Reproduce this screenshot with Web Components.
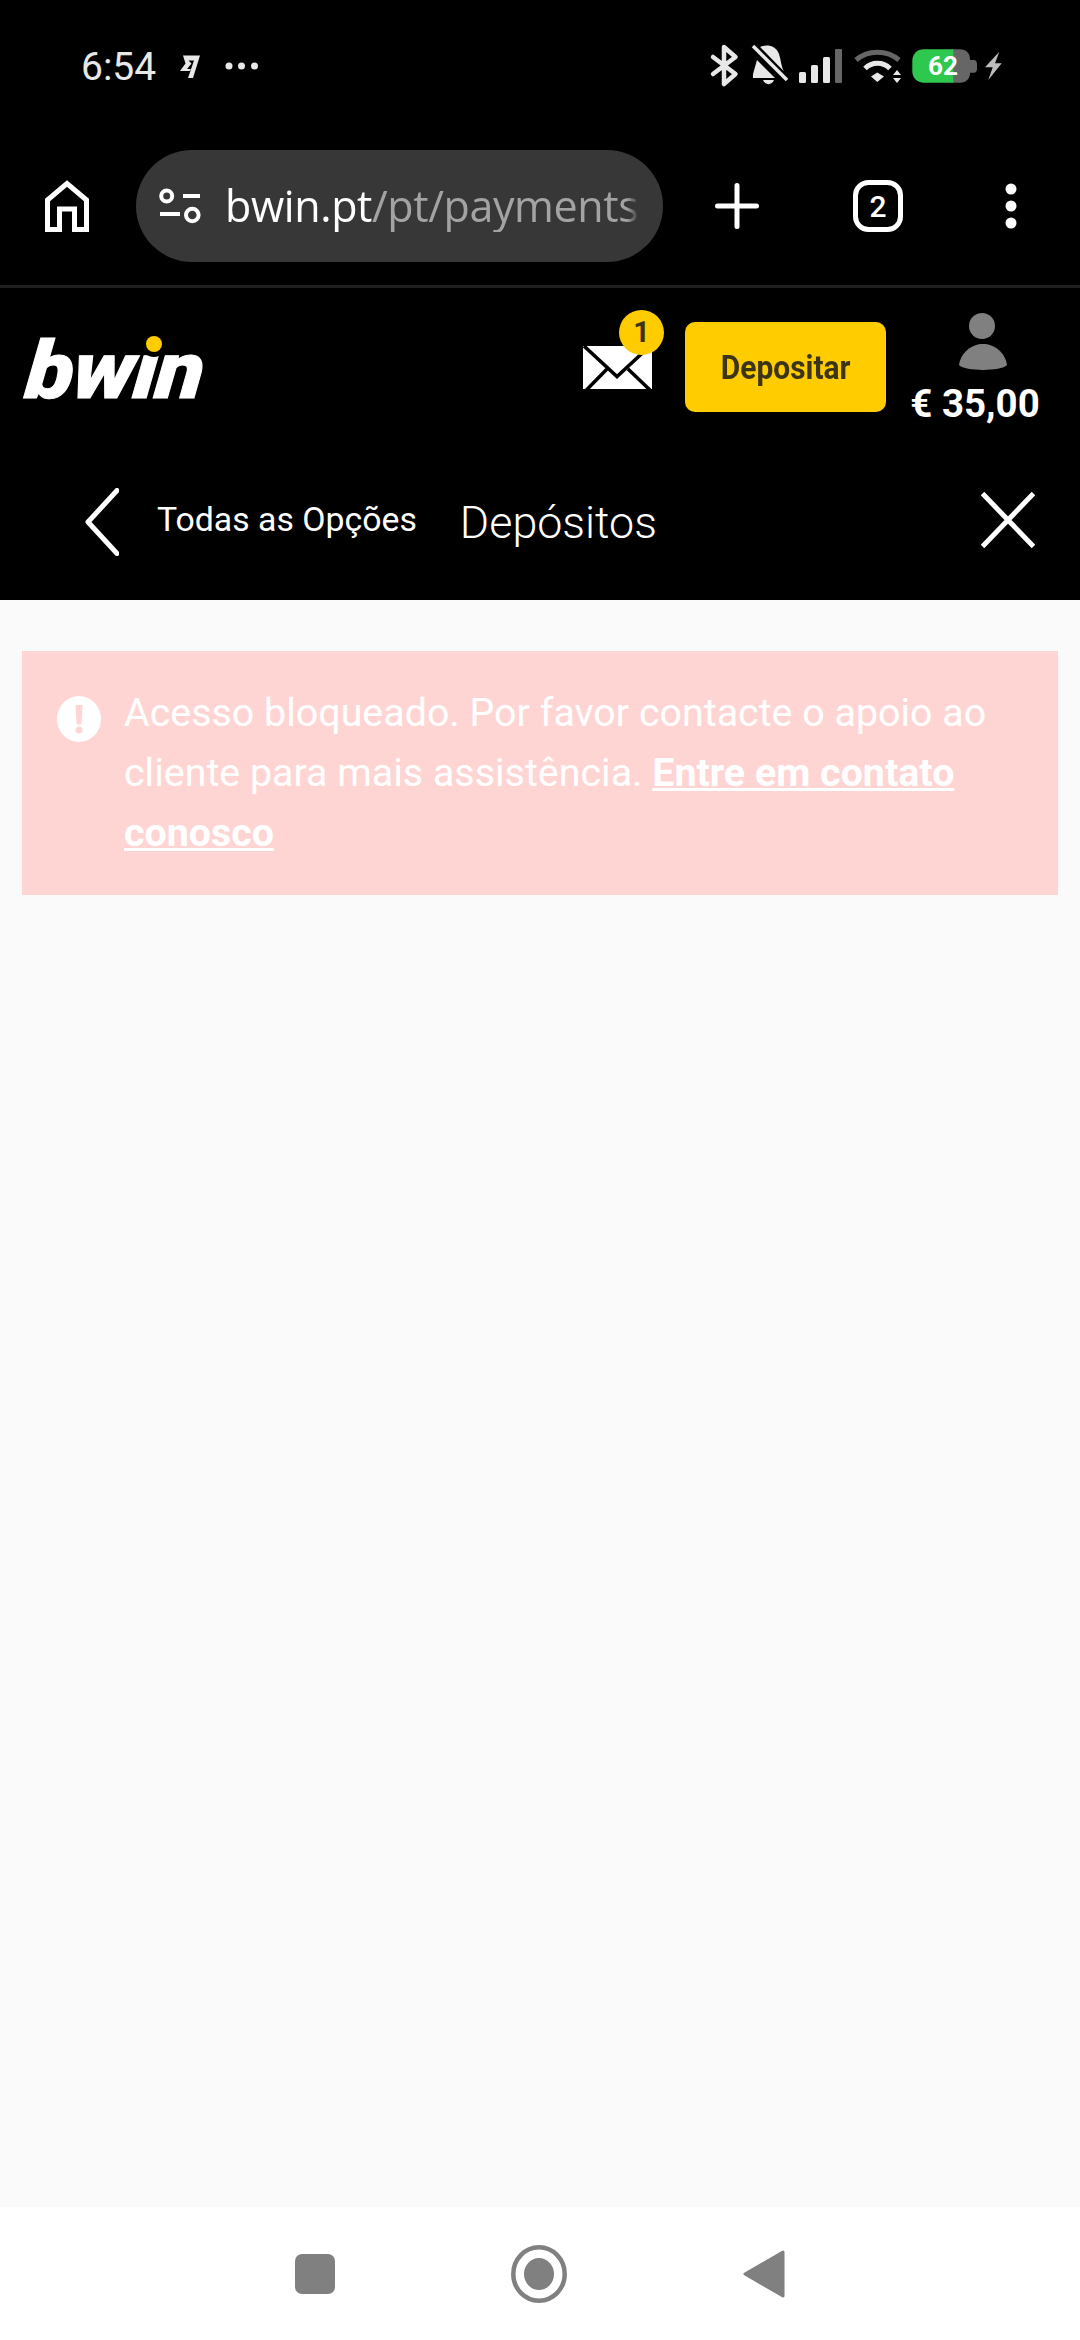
<!DOCTYPE html>
<html lang="pt">
<head>
<meta charset="utf-8">
<title>bwin</title>
<style>
html, body { margin: 0; padding: 0; background: #000; }
body { font-family: Roboto, "Liberation Sans", sans-serif; }
</style>
</head>
<body>
<app-shell>
    <status-bar slot="status" time="6:54" battery="62"></status-bar>
    <browser-bar slot="browser" tabs="2">
        <span slot="host">bwin.pt</span><span slot="path">/pt/payments</span>
    </browser-bar>
    <site-header slot="header" balance="€ 35,00" count="1">Depositar</site-header>
    <sub-header slot="header">
        <span slot="back">Todas as Opções</span>
        <span slot="title">Depósitos</span>
    </sub-header>
    <alert-box>
        Acesso bloqueado. Por favor contacte o apoio ao<br>
        cliente para mais assistência. <a href="#">Entre em contato</a><br>
        <a href="#">conosco</a>
    </alert-box>
    <nav-bar slot="nav"></nav-bar>
</app-shell>

<script>
function define(name, html, setup) {
    const template = document.createElement('template');
    template.innerHTML = html;
    customElements.define(name, class extends HTMLElement {
        constructor() {
            super();
            this.attachShadow({ mode: 'open' });
            this.shadowRoot.appendChild(template.content.cloneNode(true));
        }
        connectedCallback() {
            if (setup) setup(this.shadowRoot, this);
        }
    });
}

define('app-shell', `
<style>
:host { display: flex; flex-direction: column; width: 1080px; height: 2340px; background: #000; }
main { flex: 1; background: #fafafa; padding: 51px 22px; box-sizing: border-box; }
</style>
<slot name="status"></slot>
<slot name="browser"></slot>
<slot name="header"></slot>
<main><slot></slot></main>
<slot name="nav"></slot>
`);

define('status-bar', `
<style>
:host { display: flex; align-items: center; height: 130px; box-sizing: border-box; padding: 2px 78px 0 81px; color: #e8e8e8; }
.time { font: 400 39px/1 Roboto, sans-serif; width: 77px; margin-top: 3px; }
.left { flex: 1; display: flex; align-items: center; }
svg { display: block; flex: none; }
</style>
<div class="left">
    <span class="time"></span>
    <svg width="20" height="23" viewBox="0 0 20 23" style="margin-left:22px">
        <path d="M3 .500H20L13 23H8L14 5.500H8.500L11.500 8.500 7 14H11L9.500 16H0L5.500 8.500Z" fill="#e8e8e8"/>
    </svg>
    <svg width="36" height="8" viewBox="0 0 36 8" style="margin-left:25px">
        <circle cx="4" cy="4" r="3.500" fill="#e8e8e8"/><circle cx="16.500" cy="4" r="3.500" fill="#e8e8e8"/><circle cx="29.500" cy="4" r="3.500" fill="#e8e8e8"/>
    </svg>
</div>
<svg width="296" height="44" viewBox="706 44 296 44">
    <!-- bluetooth -->
    <path d="M713 57 735.500 74 724 84V47L735.500 57 713 74" fill="none" stroke="#e8e8e8" stroke-width="4.500" stroke-linejoin="round" stroke-linecap="round"/>
    <!-- muted bell -->
    <path d="M760 47C766 44 776 45 779 54 781 60 781 66 784 72ZM757 60 753 74V78H775ZM763 80H774C772 85.500 765 85.500 763 80Z" fill="#e8e8e8"/>
    <path d="M753 46 787 80" stroke="#000" stroke-width="8"/>
    <path d="M753 46 787 80" stroke="#e8e8e8" stroke-width="3.500"/>
    <!-- signal -->
    <rect x="799" y="72" width="7" height="11" rx="1.500" fill="#e8e8e8"/>
    <rect x="811" y="65" width="7" height="18" rx="1.500" fill="#e8e8e8"/>
    <rect x="823" y="57" width="7" height="26" rx="1.500" fill="#e8e8e8"/>
    <rect x="835" y="49" width="7" height="34" rx="1" fill="#666"/>
    <!-- wifi -->
    <path d="M856 60C868 49.500 887 49.500 899 60" fill="none" stroke="#666" stroke-width="5"/>
    <path d="M865 68.500C872 61.500 883 61.500 890 68.500" fill="none" stroke="#e8e8e8" stroke-width="5"/>
    <path d="M871 76.500 877.300 72.500 884 76.500 877.300 82Z" fill="#e8e8e8"/>
    <path d="M893 75 897 70 901 75ZM893 78H901L897 83Z" fill="#e8e8e8"/>
    <!-- battery -->
    <path d="M952 49.300H960C966 49.300 970 53 970 59.500V60H974C976 60 977 62 977 64V69C977 71 976 72.700 974 72.700H970V73C970 79 966 82.700 960 82.700H952Z" fill="#666"/>
    <path d="M953.300 49.300H924C917 49.300 912.300 54 912.300 61V71C912.300 78 917 82.700 924 82.700H953.300Z" fill="#2dc84d"/>
    <text x="943" y="74.500" text-anchor="middle" font-family="Roboto, sans-serif" font-weight="700" font-size="26" fill="#fff" textLength="30" lengthAdjust="spacingAndGlyphs" class="battery"></text>
    <!-- charging -->
    <path d="M999.300 51.700 985 67.300H992.700L988.300 80 1001.700 63.300H995Z" fill="#bdbdbd"/>
</svg>
`, (root, el) => {
    root.querySelector('.time').textContent = el.getAttribute('time');
    root.querySelector('.battery').textContent = el.getAttribute('battery');
});

define('browser-bar', `
<style>
:host { display: flex; align-items: center; height: 158px; box-sizing: border-box; padding: 20px 0 23px 45px; border-bottom: 3px solid #202020; }
.pill { display: flex; align-items: center; width: 527px; height: 112px; border-radius: 56px; background: #373737; margin-left: 47px; padding-left: 22px; box-sizing: border-box; overflow: hidden; flex: none; }
.url { font: 400 43px/1.2 "Open Sans", Roboto, sans-serif; white-space: nowrap; margin-left: 23px; color: #fff; width: 414px; overflow: hidden; letter-spacing: -.4px; -webkit-mask-image: linear-gradient(to right, #000 97%, transparent 100%); mask-image: linear-gradient(to right, #000 97%, transparent 100%); }
.path { color: #a3a3a3; }
svg { display: block; flex: none; }
</style>
<svg width="44" height="52" viewBox="0 0 44 52" fill="none" stroke="#fff" stroke-width="5">
    <path d="M2.500 49.500V20L22 3.500 41.500 20V49.500H29.500V29H14.500V49.500Z"/>
</svg>
<div class="pill">
    <svg width="44" height="36" viewBox="0 0 44 36" fill="none" stroke="#fff" stroke-width="4">
        <circle cx="8.700" cy="8" r="5.500"/><path d="M25 8H42M2 26H22" /><circle cx="34.300" cy="27" r="6.300"/>
    </svg>
    <div class="url"><slot name="host"></slot><span class="path"><slot name="path"></slot></span></div>
</div>
<svg style="margin-left:52px" width="44" height="46" viewBox="0 0 44 46" stroke="#fff" stroke-width="5" stroke-linecap="round">
    <path d="M22 2.500V43.500M2.500 23H41.500"/>
</svg>
<svg style="margin-left:94px" width="50" height="52" viewBox="0 0 50 52">
    <rect x="2.500" y="2.500" width="45" height="47" rx="13" fill="none" stroke="#fff" stroke-width="5"/>
    <text class="tabs" x="25" y="37" text-anchor="middle" font-family="Roboto, sans-serif" font-weight="500" font-size="30" fill="#fff"></text>
</svg>
<svg style="margin-left:102px" width="12" height="46" viewBox="0 0 12 46" fill="#fff">
    <circle cx="6" cy="6" r="5.500"/><circle cx="6" cy="23" r="5.500"/><circle cx="6" cy="40" r="5.500"/>
</svg>
`, (root, el) => {
    root.querySelector('.tabs').textContent = el.getAttribute('tabs');
});

define('site-header', `
<style>
:host { display: flex; height: 152px; box-sizing: border-box; padding-left: 24px; color: #fff; }
.logo { position: relative; display: block; width: 179px; height: 72px; margin-top: 47px; flex: none; }
.word { display: block; font: italic 900 80px/72px Roboto, sans-serif; letter-spacing: -1px; color: #fff; -webkit-text-stroke: 1px #fff; transform: scaleX(1.1) skewX(-5deg); transform-origin: 0 62px; white-space: nowrap; }
.dot { position: absolute; left: 122px; top: 1px; width: 16px; height: 16px; border-radius: 50%; background: #ffcc00; box-shadow: 0 0 0 5px #000; }
.mail { position: relative; flex: none; width: 69px; height: 43px; margin: 58px 0 0 380px; }
.mail svg { display: block; }
.badge { position: absolute; left: 36px; top: -36px; width: 45px; height: 45px; border-radius: 50%; background: #ffcc00; color: #3c3416; font: 700 29px/45px Roboto, sans-serif; text-align: center; }
.btn { flex: none; display: flex; align-items: center; justify-content: center; width: 201px; height: 90px; margin: 34px 0 0 33px; border-radius: 10px; background: #ffcc00; color: #3c3416; font: 700 34px/1 Roboto, sans-serif; }
.btn span { display: inline-block; transform: scaleX(.88); white-space: nowrap; }
.account { flex: none; display: flex; flex-direction: column; align-items: center; margin: 25px 0 0 24px; width: 130px; }
.balance { font: 700 38.500px/1 Roboto, sans-serif; white-space: nowrap; margin-top: 14px; }
.account svg { display: block; margin-left: 16px; }
</style>
<div class="logo"><span class="word">bwin</span><i class="dot"></i></div>
<div class="mail">
    <svg width="69" height="43" viewBox="0 0 69 43">
        <path d="M0 0H69V43H0Z" fill="#fff"/>
        <path d="M1 0 34 30.500 67 0M3.500 44 24 23M67 44 45 23" fill="none" stroke="#000" stroke-width="3.500"/>
    </svg>
    <span class="badge"></span>
</div>
<div class="btn"><span><slot></slot></span></div>
<div class="account">
    <svg width="48" height="58" viewBox="0 0 48 58" fill="#808080">
        <circle cx="23" cy="13" r="13"/>
        <path d="M0 52C2 39 13 31 24 31S46 39 48 52C42 58.500 6 58.500 0 52Z"/>
    </svg>
    <span class="balance"></span>
</div>
`, (root, el) => {
    root.querySelector('.balance').textContent = el.getAttribute('balance');
    root.querySelector('.badge').textContent = el.getAttribute('count');
});

define('sub-header', `
<style>
:host { display: flex; align-items: center; height: 160px; box-sizing: border-box; padding: 6px 45px 0 85px; color: #fff; }
svg { display: block; flex: none; }
.back { font: 400 33.800px/1 Roboto, sans-serif; margin-left: 38px; margin-top: -6px; white-space: nowrap; }
.title { font: 300 44.800px/1 Roboto, sans-serif; margin-left: 43px; white-space: nowrap; }
.close { margin-left: auto; margin-top: -6px; }
</style>
<svg width="34" height="68" viewBox="0 0 34 68" fill="none" stroke="#fff" stroke-width="5" stroke-linecap="round" stroke-linejoin="round" style="margin-top:-2px">
    <path d="M32 2.500 3 34 32 65.500"/>
</svg>
<span class="back"><slot name="back"></slot></span>
<span class="title"><slot name="title"></slot></span>
<svg class="close" width="54" height="56" viewBox="0 0 54 56" stroke="#fff" stroke-width="5">
    <path d="M1.500 1.500 52.500 54.500M52.500 1.500 1.500 54.500"/>
</svg>
`);

define('alert-box', `
<style>
:host { display: flex; align-items: flex-start; box-sizing: border-box; min-height: 244px; padding: 32px 40px 32px 35px; background: #ffd5d3; color: #fff; font: 400 39.400px/60px Roboto, sans-serif; }
svg { display: block; flex: none; margin: 13px 23px 0 0; }
::slotted(a) { color: #fff; font-weight: 700; text-decoration: underline; }
</style>
<svg width="44" height="46" viewBox="0 0 44 46">
    <ellipse cx="22" cy="23" rx="22" ry="23" fill="#fff"/>
    <path d="M19 9.500H25L23.800 28H20.200Z" fill="#ffd5d3" stroke="#ffd5d3" stroke-width="1" stroke-linejoin="round"/>
    <circle cx="22" cy="34" r="3.500" fill="#ffd5d3"/>
</svg>
<div><slot></slot></div>
`);

define('nav-bar', `
<style>
:host { display: flex; height: 133px; background: #fff; align-items: center; padding-left: 295px; box-sizing: border-box; }
svg { display: block; flex: none; }
</style>
<svg width="40" height="40" viewBox="0 0 40 40"><rect width="40" height="40" rx="7" fill="#808080"/></svg>
<svg style="margin-left:176px" width="56" height="58" viewBox="0 0 56 58">
    <ellipse cx="28" cy="29" rx="25.700" ry="26.700" fill="none" stroke="#808080" stroke-width="4.500"/>
    <ellipse cx="28" cy="29" rx="15" ry="16" fill="#808080"/>
</svg>
<svg style="margin-left:176px" width="42" height="48" viewBox="0 0 42 48">
    <path d="M40 2 2 24 40 46Z" fill="#808080" stroke="#808080" stroke-width="3" stroke-linejoin="round"/>
</svg>
`);
</script>
</body>
</html>
